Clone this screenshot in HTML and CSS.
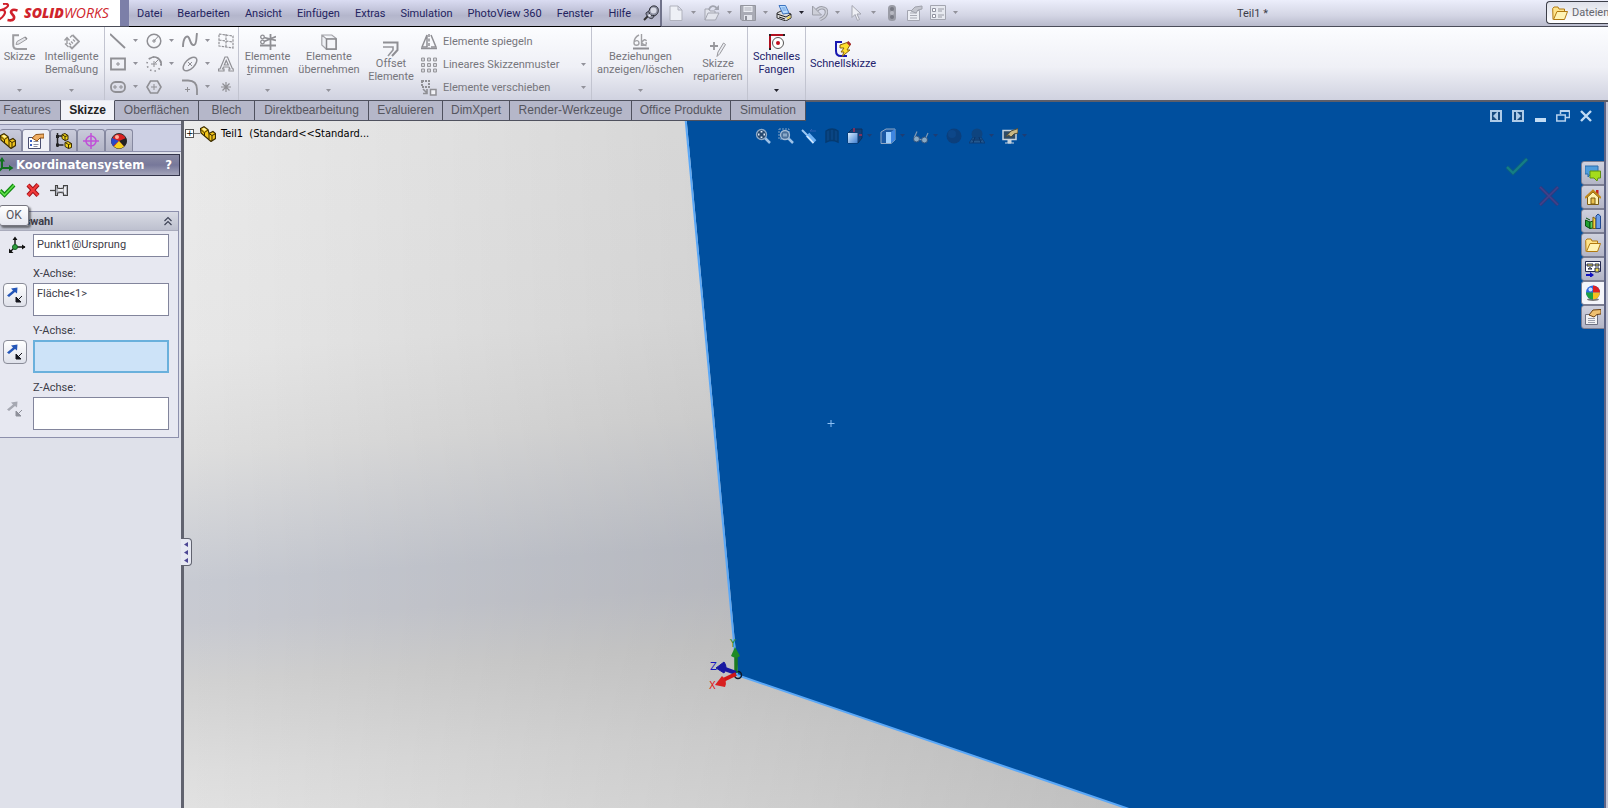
FILE: index.html
```html
<!DOCTYPE html>
<html lang="de">
<head>
<meta charset="utf-8">
<title>SolidWorks – Teil1</title>
<link rel="stylesheet" href="styles.css">
</head>
<body>
<svg class="sprite" aria-hidden="true">
  <defs>
    <linearGradient id="gold" x1="0" y1="0" x2="1" y2="1"><stop offset="0" stop-color="#fff6a8"/><stop offset="1" stop-color="#e0a020"/></linearGradient>
    <linearGradient id="lens" x1="0" y1="0" x2="1" y2="1"><stop offset="0" stop-color="#d8ecff"/><stop offset="1" stop-color="#3f7fd0"/></linearGradient>
  </defs>
  <symbol id="i-arrow" viewBox="0 0 6 4"><path d="M0 0h5L2.500 3z" fill="currentColor"/></symbol>
  <symbol id="i-pin" viewBox="0 0 16 16"><path d="M1 15 5 11" stroke="#333" stroke-width="2"/><path d="M3 8.500C3 7 5 7 6 6l1-3c2-3 6-2.500 7.500-.5s1 6-1.500 7.500l-2 1c-1 3-3 3-4.500 2S3 10 3 8.500z" fill="#8c8fa0" stroke="#2c2e38"/><path d="M6 7c0 3 3 4 5 3.500" stroke="#2c2e38" fill="none"/><circle cx="10.500" cy="5.500" r="3" fill="#d8dae6"/><circle cx="6.500" cy="10.500" r="1.300" fill="#eef0f8"/></symbol>
  <symbol id="i-new" viewBox="0 0 16 16"><path d="M2 1h8l4 4v10.500H2zM10 1v4h4" fill="#eef0f6" stroke="#b0b2bd"/></symbol>
  <symbol id="i-open" viewBox="0 0 16 16"><path d="M1 15V4h4l1 2h5v2M1 15l3-7h11l-3.500 7z" fill="#e2e4ec" stroke="#a3a5b0"/><path d="M5 5c1-5 6-5 8-1" fill="none" stroke="#a3a5b0" stroke-width="1.600"/><path d="M10 5h5V0z" fill="#a3a5b0"/></symbol>
  <symbol id="i-save" viewBox="0 0 16 16"><path d="M.5.500h15v15H2L.5 14z" fill="#a9abb5" stroke="#94969f"/><path d="M3.500 1h9v6h-9z" fill="#eceef4"/><path d="M4.500 3h7M4.500 5h7" stroke="#a9abb5"/><path d="M4 10h8v5H4z" fill="#e3e5ec"/><path d="M5 11h2v4H5z" fill="#8d8f99"/></symbol>
  <symbol id="i-print" viewBox="0 0 16 16"><path d="M1 8l4-2 10 3v4l-5 3-9-3z" fill="#d9d9d9" stroke="#333"/><path d="M3 .5h6.500L13 8l-6 1z" fill="#b7dcff" stroke="#3d74c0"/><path d="M5.500 3h4m-3 2h4" stroke="#6a9cdc"/><path d="M1 9l9 3 5-3M3 12l6 2" stroke="#222" fill="none"/><path d="M11 13.500l3.500-2" stroke="#ecd34c" stroke-width="1.500"/></symbol>
  <symbol id="i-undo" viewBox="0 0 16 16"><path d="M4 7c3-6 10.500-5 10.500 0 0 4-3 6-6.500 7.500" fill="none" stroke="#9c9ea8" stroke-width="3.500"/><path d="M4 7c3-6 10.500-5 10.500 0 0 4-3 6-6.500 7.500" fill="none" stroke="#cdcfd8" stroke-width="1.500"/><path d="M.5 1v9h9z" fill="#cdcfd8" stroke="#9c9ea8"/></symbol>
  <symbol id="i-select" viewBox="0 0 16 16"><path d="M4 .5v12l3-3 2.500 6 2-1-2.500-5.500h4z" fill="#eff0f5" stroke="#a3a5b0"/></symbol>
  <symbol id="i-light" viewBox="0 0 16 16"><rect x="4" y="0" width="8" height="16" rx="3.500" fill="#9a9ca6"/><circle cx="8" cy="4" r="2" fill="#777984"/><circle cx="8" cy="8" r="2" fill="#b7b9c2"/><circle cx="8" cy="12" r="2" fill="#777984"/></symbol>
  <symbol id="i-filegray" viewBox="0 0 16 16"><path d="M.5 5.500h12v10H.5z" fill="#eceef4" stroke="#a3a5b0"/><path d="M3 8h7m-7 2.500h7M3 13h7" stroke="#a9abb5"/><path d="M4 6l4-4 7-1v3l-4 1-2 3z" fill="#c3c5ce" stroke="#a0a2ac"/></symbol>
  <symbol id="i-options" viewBox="0 0 16 16"><path d="M.5.500h15v14H.5z" fill="#e7e9f0" stroke="#a3a5b0"/><path d="M2.500 3.500h3v3h-3zM2.500 9.500h3v3h-3z" fill="#fff" stroke="#9092a0"/><path d="M8 4h6M8 6h4m-4 4h6m-6 2h4" stroke="#9a9ca6"/></symbol>
  <symbol id="i-folder" viewBox="0 0 16 16"><path d="M1 14.500 .7 3.500 2 2h4l1 2h5.500v2.500" fill="#ffe48a" stroke="#b07810"/><path d="M1.500 14.500 5 6.500h10.500l-3 8z" fill="#fff3b4" stroke="#b07810"/></symbol>

  <symbol id="i-sketch" viewBox="0 0 16 16"><path d="M7 1.200H1.200V11q0 4 4 4H15" fill="none" stroke="#9c9ca0" stroke-width="2"/><path d="M4 10.500l1-3 8-4.500 2 2-8 5z" fill="#e4e5ea" stroke="#9c9ca0"/><path d="M13 3l2 2" stroke="#88888c" stroke-width="1.500"/></symbol>
  <symbol id="i-dim" viewBox="0 0 16 16"><path d="M8.500 1 15 7.500 8 14.500 5.500 12" fill="none" stroke="#9c9ca0" stroke-width="1.800"/><path d="M8.500 1 6 3.500M9 5.500l2 2M7 7.500l2 2M5 9l2 2" fill="none" stroke="#9c9ca0" stroke-width="1.400"/><path d="M3 10V4M.5 6.500 3 3.500l2.500 3M1 9.500 4.500 13" stroke="#9c9ca0" stroke-width="1.400" fill="none"/></symbol>
  <symbol id="i-line" viewBox="0 0 16 16"><path d="M0 1l15 14" stroke="#8f8f94" stroke-width="1.800"/></symbol>
  <symbol id="i-circle" viewBox="0 0 16 16"><circle cx="8" cy="8" r="6.800" fill="none" stroke="#8f8f94" stroke-width="1.500"/><path d="M8 8l4.500-5M8 6v4M6 8h4" stroke="#8f8f94"/></symbol>
  <symbol id="i-spline" viewBox="0 0 16 16"><path d="M1 14C1 5 5 1 7 5s2 8 5 7 2-6 3-12" fill="none" stroke="#8f8f94" stroke-width="1.900"/></symbol>
  <symbol id="i-plane" viewBox="0 0 16 16"><path d="M1 1l14 2v12L1 13zM1 7l14 2M8 1v14" fill="none" stroke="#8f8f94" stroke-width="1.200" stroke-dasharray="2.500 1"/></symbol>
  <symbol id="i-rect" viewBox="0 0 16 16"><path d="M1 2.500h14v11H1z" fill="none" stroke="#8f8f94" stroke-width="1.800"/><path d="M7 7h2v2H7z" fill="none" stroke="#8f8f94"/></symbol>
  <symbol id="i-arc" viewBox="0 0 16 16"><path d="M4 2.500a7 7 0 0 1 11 7" fill="none" stroke="#8f8f94" stroke-width="1.600"/><circle cx="8" cy="8" r="7" fill="none" stroke="#8f8f94" stroke-width="1.600" stroke-dasharray="1.500 3"/><path d="M8 5v6M5 8h6m-2-1 3-3" stroke="#8f8f94"/></symbol>
  <symbol id="i-ellipse" viewBox="0 0 16 16"><ellipse cx="8" cy="8" rx="8.500" ry="4.500" transform="rotate(-45 8 8)" fill="none" stroke="#8f8f94" stroke-width="1.500"/><path d="M6 6l4 4m0-4-4 4" stroke="#8f8f94"/></symbol>
  <symbol id="i-text" viewBox="0 0 16 16"><path d="M7 1h2.500l5 12H16v2h-5v-2h1l-1-2H5.500l-1 2H6v2H.5v-2H2zM8.200 4.500 6.300 9h4z" fill="none" stroke="#8f8f94" stroke-width="1.200"/></symbol>
  <symbol id="i-slot" viewBox="0 0 16 16"><rect x="1" y="3" width="14" height="10" rx="4.500" fill="none" stroke="#8f8f94" stroke-width="1.800"/><path d="M4 7h2v2H4zm6 0h2v2h-2z" fill="none" stroke="#8f8f94"/></symbol>
  <symbol id="i-hex" viewBox="0 0 16 16"><path d="M4.500 2h7L15 8l-3.500 6h-7L1 8z" fill="none" stroke="#8f8f94" stroke-width="1.600"/><path d="M8 5v6M5 8h6" stroke="#8f8f94"/></symbol>
  <symbol id="i-fillet" viewBox="0 0 16 16"><path d="M0 1.500h6q9 0 9 9V16" fill="none" stroke="#8f8f94" stroke-width="1.800"/><path d="M5.500 8v5M3 10.500h5" stroke="#8f8f94"/></symbol>
  <symbol id="i-point" viewBox="0 0 16 16"><path d="M8 3v10M3 8h10M4.500 4.500l7 7m0-7-7 7" stroke="#8f8f94" stroke-width="1.200"/></symbol>
  <symbol id="i-trim" viewBox="0 0 16 16"><path d="M0 11.500h16M10.500 0v16M4 3.500l12 3M4 7.500l12-5" stroke="#8f8f94" stroke-width="1.800"/><circle cx="2.500" cy="3" r="1.800" fill="none" stroke="#8f8f94" stroke-width="1.300"/><circle cx="2.500" cy="8" r="1.800" fill="none" stroke="#8f8f94" stroke-width="1.300"/></symbol>
  <symbol id="i-convert" viewBox="0 0 16 16"><path d="M.8 1h10l4.500 3.500v10.800H5.500L.8 11zM.8 1 5.500 5h9.800" fill="#eef0f5" stroke="#a4a4a9" stroke-width="1.200"/><path d="M5.500 5h9.500v10H5.500z" fill="#f4f5f9" stroke="#88888c" stroke-width="1.500"/></symbol>
  <symbol id="i-offset" viewBox="0 0 16 16"><path d="M0 1.500h14.500V9L9 15" fill="none" stroke="#8f8f94" stroke-width="2"/><path d="M0 6h10v3l-5 6" fill="none" stroke="#97979c" stroke-width="1.600"/></symbol>
  <symbol id="i-mirror" viewBox="0 0 16 16"><path d="M6 1 1 13h5zm4 0 5 12h-5" fill="none" stroke="#8f8f94" stroke-width="1.500"/><path d="M8 0v15" stroke="#8f8f94" stroke-width="1.500" stroke-dasharray="3 1.500"/><path d="M0 14.500h16" stroke="#8f8f94" stroke-width="1.500"/></symbol>
  <symbol id="i-pattern" viewBox="0 0 16 16"><path d="M.5 1h3v3h-3zm6 0h3v3h-3zm6 0h3v3h-3zM.5 6.500h3v3h-3zm6 0h3v3h-3zm6 0h3v3h-3zM.5 12h3v3h-3zm6 0h3v3h-3zm6 0h3v3h-3z" fill="#d4d5da" stroke="#98989d"/></symbol>
  <symbol id="i-move" viewBox="0 0 16 16"><path d="M1 1h7v6H1z" fill="none" stroke="#8f8f94" stroke-width="2" stroke-dasharray="2 1"/><path d="M9.500 9.500h5.500v5.500H9.500z" fill="#f2f3f7" stroke="#8f8f94" stroke-width="1.500"/><path d="M2 9l4 4m0-4v4.500H2" fill="none" stroke="#8f8f94" stroke-width="1.600"/></symbol>
  <symbol id="i-relations" viewBox="0 0 16 16"><path d="M6 1C2 3 1 6 1 9c0 3 5 3 5 0S3 6 1 8M8.500 0v12M8.500 9c2-4 4-4 5-2m-5 2 5 3M9 11c4 1 5-1 4-3" fill="none" stroke="#a0a0a4" stroke-width="1.400"/><path d="M0 14.500h16" stroke="#8f8f94" stroke-width="2"/></symbol>
  <symbol id="i-repair" viewBox="0 0 16 16"><path d="M0 5h8M4 1v8" stroke="#97979c" stroke-width="1.800"/><path d="M7 15.500 8 11l5.500-9 2 1.500-5.500 9z" fill="#eceef3" stroke="#97979c"/></symbol>
  <symbol id="i-snap" viewBox="0 0 16 16"><path d="M1 16V1h15" fill="none" stroke="#b01020" stroke-width="2"/><path d="M0 0h2v2H0zM0 14h2v2H0zM14 0h2v2h-2z" fill="#222"/><circle cx="9" cy="9" r="5.500" fill="#fff" stroke="#555"/><circle cx="9" cy="9" r="2" fill="#c01020"/></symbol>
  <symbol id="i-rapid" viewBox="0 0 16 16"><path d="M7 1H1v9q0 5 5 5h6" fill="none" stroke="#1818b0" stroke-width="2"/><path d="M13.500 1 5 4v3h4l-3 4h3l-2 4.500L15 9h-3l3-5z" fill="#ffdf30" stroke="#8a6410"/><path d="M12.500 1l3 3" stroke="#a83030" stroke-width="2.500"/></symbol>

  <symbol id="i-part" viewBox="0 0 16 16"><path d="M.5 2.500 4 .8 8 3.500l1 4 4-2 2.500 2v5L11 15.500 1 7z" fill="#f2c51c" stroke="#3b2c00" stroke-width="1.200"/><path d="M1 3.500 4.500 7v3M4.500 6.500 8 4M9 8v5m0-5.500 3 2 3-1.500M12 9.500V15" fill="none" stroke="#3b2c00"/><path d="M2 3l2-1.300L6.500 3.500 4.800 5z" fill="#fff3a0"/></symbol>
  <symbol id="i-props" viewBox="0 0 16 16"><path d="M.5 4.500h12v11H.5z" fill="#fff" stroke="#4a4f70"/><path d="M2 7h2v2H2zm0 4h2v2H2z" fill="#3c60c0"/><path d="M5.500 8.500h5m-5 3h5m-5 2h4" stroke="#8a8ea4"/><path d="M4 5l4-3.500 8-.5v4h-4L9 8z" fill="#f0ae62" stroke="#8c5218"/></symbol>
  <symbol id="i-custom" viewBox="0 0 16 16"><path d="M.5 5.500h12v10H.5z" fill="#f2f2f4" stroke="#6c7080"/><path d="M3 9.500h7m-7 2h7m-7 2h7" stroke="#9a9eac"/><path d="M4 6l4-5 8-.5V5l-4 .5L9 8z" fill="#efc070" stroke="#6c4010"/></symbol>
  <symbol id="i-config" viewBox="0 0 16 16"><path d="M1.500 0v14M1.500 3h5M1.500 12h6" fill="none" stroke="#222" stroke-width="1.500"/><path d="M0 2h3v3H0zM0 10.500h3v3H0z" fill="#222"/><path d="M6 1.500l3-1 3 2v4L9 7.500 6 5.500zM9 9.500l3-1 3.500 2v4l-3 1L9 13.500z" fill="#f2d51c" stroke="#3b2c00"/><path d="M6 1.500l3 2v4M9 3.500l3-1M9 9.500l3.500 2v4m0-4 3-1" fill="none" stroke="#3b2c00"/></symbol>
  <symbol id="i-target" viewBox="0 0 16 16"><circle cx="8" cy="8" r="5" fill="none" stroke="#c050d8" stroke-width="1.600"/><path d="M8 0v16M0 8h16" stroke="#c050d8" stroke-width="1.500"/></symbol>
  <symbol id="i-ball" viewBox="0 0 16 16"><ellipse cx="8" cy="14.500" rx="6" ry="1.500" fill="#777"/><circle cx="8" cy="7.500" r="7" fill="#2f6ae0"/><path d="M8 7.500V.5a7 7 0 0 1 7 7z" fill="#e02020"/><path d="M8 7.500h7a7 7 0 0 1-7 7z" fill="#f5c020"/><path d="M8 7.500v7a7 7 0 0 1-7-7z" fill="#20a040"/><circle cx="5.500" cy="4.500" r="2" fill="#c8dcff"/></symbol>
  <symbol id="i-ballsw" viewBox="0 0 16 16"><circle cx="8" cy="8" r="7.500" fill="#d82020" stroke="#333"/><path d="M8 8 1 5a7.500 7.500 0 0 0 1 8z" fill="#2848c8"/><path d="M8 8 15 5a7.500 7.500 0 0 1-2 8.500z" fill="#222"/><path d="M8 8l5 5.500a7.500 7.500 0 0 1-10 0z" fill="#f4d020"/><circle cx="6" cy="4" r="2" fill="#ffb0a0"/></symbol>
  <symbol id="i-csys" viewBox="0 0 16 16"><path d="M2 11V2M2 11h10M2 11l-4 4" stroke="#107020" stroke-width="2"/><path d="M-1 4.500 2 0l3 4.500zM9 8l4.500 3L9 14z" fill="#107020"/></symbol>
  <symbol id="i-origin" viewBox="0 0 18 18"><path d="M7 11V2M7 11h10M7 11l-5 5" stroke="#111" stroke-width="1.400" fill="none"/><path d="M4.500 4 7 .5 9.500 4zM14 8.500l3.500 2.500-3.500 2.500zM1 12.500V17h4.500z" fill="#111"/><circle cx="7" cy="11" r="2.500" fill="#30a040" stroke="#106020"/></symbol>
  <symbol id="i-ok" viewBox="0 0 16 16"><path d="M0 8.500 4.500 13 14 3" fill="none" stroke="#128a12" stroke-width="4"/><path d="M0 8.500 4.500 13 14 3" fill="none" stroke="#5fe04a" stroke-width="1.600"/></symbol>
  <symbol id="i-cancel" viewBox="0 0 16 16"><path d="M3 3l10 10.500M13 2.500 3 13.500" stroke="#a01018" stroke-width="4.200"/><path d="M3 3l10 10.500M13 2.500 3 13.500" stroke="#f03a3a" stroke-width="2.400"/></symbol>
  <symbol id="i-keep" viewBox="0 0 18 16"><path d="M0 8.500h6" stroke="#444" stroke-width="1.300"/><path d="M5.500 3.500h2V6q3 1 6 0V3.500h4v10h-4V11q-3-1-6 0v2.500h-2z" fill="#b4b6c0" stroke="#444" stroke-width="1.100"/><path d="M8 8h5m2-3v7" stroke="#fff" stroke-width="1.500"/></symbol>
  <symbol id="i-flip" viewBox="0 0 16 16"><path d="M0 8.500 6 3.500 4 1.500 10.500.5 10 6.500 8 5l-6 5z" fill="var(--flip-a)"/><path d="M15 9l-3.500 3.500M9 10v5h5z" fill="var(--flip-b)" stroke="var(--flip-b)"/></symbol>
  <symbol id="i-chevrons" viewBox="0 0 10 10"><path d="M1.500 5 5 1.500 8.500 5M1.500 9 5 5.500 8.500 9" fill="none" stroke="#3e4356" stroke-width="1.200"/></symbol>

  <symbol id="i-zoomfit" viewBox="0 0 16 16"><path d="M10 10l5 5" stroke="#9cc2e8" stroke-width="2.500"/><circle cx="6.500" cy="6.500" r="5" fill="#27496f" stroke="#8ea9c6" stroke-width="1.300"/><path d="M6.500 3v1.500m0 4V10M3 6.500h1.500m4 0H10" stroke="#e4eefa" stroke-width="1.800"/></symbol>
  <symbol id="i-zoomarea" viewBox="0 0 16 16"><path d="M10 10l5 5" stroke="#9cc2e8" stroke-width="2.500"/><path d="M1 1h10v10H1z" fill="none" stroke="#7fa0c4" stroke-dasharray="2 1"/><circle cx="7" cy="7" r="4.500" fill="#4a709b" stroke="#a4bcd6" stroke-width="1.300"/><path d="M5 5.500h4v3H5z" fill="#88a8c8"/></symbol>
  <symbol id="i-prev" viewBox="0 0 16 16"><path d="M1 2l6 6" stroke="#9cc8f4" stroke-width="2"/><path d="M6.500 6.500l7 7.500" stroke="#6eb1f4" stroke-width="5"/><path d="M6 8l6.500 7" stroke="#d9ecff" stroke-width="1.500"/><path d="M9 3h6m-6 0 2-2" stroke="#2f62b4"/></symbol>
  <symbol id="i-section" viewBox="0 0 16 16"><path d="M2 3q6-4 12 0v11q-6-3-12 0zM6 2v11m4-11v11" fill="#0a4583" stroke="#053a70" stroke-width="1.400"/></symbol>
  <symbol id="i-orient" viewBox="0 0 16 16"><path d="M1 5 5 1h10v9l-4 5H1z" fill="#123f76" stroke="#0b3160"/><path d="M1 5h9.500v10H1z" fill="url(#lens)"/><path d="M7 0v4m5 3h3" stroke="#a3305a" stroke-width="1.500"/></symbol>
  <symbol id="i-style" viewBox="0 0 16 16"><path d="M1 4 6 1h9v11l-4 3.500H1z" fill="#1a59a4" stroke="#8fa8c4"/><path d="M6 4h5v11H6z" fill="#9ed0ff"/><path d="M11 4l4-3v11l-4 3z" fill="#3e86e0"/></symbol>
  <symbol id="i-glasses" viewBox="0 0 16 16"><circle cx="3.500" cy="11" r="3" fill="#88a9c4" stroke="#31527c"/><circle cx="11.500" cy="12" r="3" fill="#88a9c4" stroke="#31527c"/><path d="M6.500 11l2 1M1.500 9 4 3.500M13 9.500 15 5" fill="none" stroke="#7e98b2" stroke-width="1.200"/></symbol>
  <symbol id="i-sphere" viewBox="0 0 16 16"><circle cx="8" cy="8" r="7.500" fill="#0b3f7c"/><circle cx="6" cy="6" r="4" fill="#0d4789"/></symbol>
  <symbol id="i-scene" viewBox="0 0 16 16"><path d="M0 15 4 9h8l4 6z" fill="#23588f" stroke="#0a3d78"/><circle cx="8" cy="6" r="5.500" fill="#0e447f"/><path d="M3 12h10M6 9l-2 6m6-6 2 6" stroke="#0a3468"/></symbol>
  <symbol id="i-monitor" viewBox="0 0 16 16"><path d="M1 2.500h13v9H1z" fill="#2e4c68" stroke="#c8d4de" stroke-width="1.500"/><path d="M3 15h9m-6-3h3v3H6z" stroke="#c8d4de" fill="#c8d4de"/><path d="M4 8.500 9 3l7-2.500V5l-4 1-3 3-2-1.500z" fill="#c9b884" stroke="#4c4a3c"/></symbol>

  <symbol id="i-winleft" viewBox="0 0 12 12"><path d="M0 0h12v12H0z" fill="#aecbe8"/><path d="M2 2h5v8H2z" fill="#164a80"/><path d="M7 2v8L3 6z" fill="#aecbe8"/><path d="M8 2h2v8H8z" fill="#164a80"/></symbol>
  <symbol id="i-winright" viewBox="0 0 12 12"><path d="M0 0h12v12H0z" fill="#aecbe8"/><path d="M5 2h5v8H5z" fill="#164a80"/><path d="M5 2v8l4-4z" fill="#aecbe8"/><path d="M2 2h2v8H2z" fill="#164a80"/></symbol>
  <symbol id="i-winmin" viewBox="0 0 12 12"><path d="M1 8h11v4H1z" fill="#c2dcf4"/></symbol>
  <symbol id="i-winmax" viewBox="0 0 14 12"><path d="M4.500 4V1h9v6.500H10" fill="none" stroke="#b7d2ee" stroke-width="1.500"/><path d="M.8 5h8.500v6H.8z" fill="none" stroke="#b7d2ee" stroke-width="1.500"/><path d="M4 1h9.500" stroke="#b7d2ee" stroke-width="2"/></symbol>
  <symbol id="i-winclose" viewBox="0 0 12 12"><path d="M1 1l10 10M11 1 1 11" stroke="#c2dcf4" stroke-width="2.400"/></symbol>

  <symbol id="i-chat" viewBox="0 0 16 16"><path d="M0 1h13v8H6l-3 3V9H0z" fill="#4f9ddc" stroke="#2a6cab"/><path d="M5 6h10.500v7H13l-1 3-3-3H5z" fill="#a5dc1c" stroke="#5e9210"/></symbol>
  <symbol id="i-home" viewBox="0 0 16 16"><path d="M11 1h2.500v5H11z" fill="#c82020"/><path d="M2.500 8v7.500h11V8L8 3z" fill="#fff2b0" stroke="#7a5a10"/><path d="M0 9 8 1.500 16 9" fill="none" stroke="#c08818" stroke-width="2"/><path d="M6 9h4v6H6z" fill="#e8c050" stroke="#7a5a10"/></symbol>
  <symbol id="i-library" viewBox="0 0 16 16"><path d="M.5 7 5 9v6.500L.5 13z" fill="#20a030" stroke="#0a5010"/><path d="M5 9l3-1v7l-3 .5zM1 5l4 2" fill="#60d060" stroke="#0a5010"/><path d="M8 4l3 2v9.500H8z" fill="#f4d040" stroke="#806010"/><path d="M11 3l2-2 2.500 2v12.500H11z" fill="#6a9ce8" stroke="#204890"/></symbol>
  <symbol id="i-palette" viewBox="0 0 16 16"><path d="M.5.500h15v10H.5z" fill="#fff" stroke="#222850"/><path d="M2 3h6v2H2zm8 0h4v2h-4zM3 8q2-3 4 0zM10 7h4v4h-4z" fill="#f2de50" stroke="#222850"/><path d="M1 14h5" stroke="#1010c0" stroke-width="2"/><path d="M5 11l4 3-4 3z" fill="#1010c0"/></symbol>
</svg>

<div class="app">
  <header class="titlebar">
    <div class="brand">
      <svg class="brand-mark" viewBox="0 0 20 20"><path d="M3 1c6-1 7 2 1 5L0 7.500M0 7c5-1 6 2 4 5s-3 4-6 5" fill="none" stroke="#d0202a" stroke-width="2.200"/><path d="M17.500 7.500c-6-2-8 1-5 4s2 7-5 5.500" fill="none" stroke="#d0202a" stroke-width="2.600"/></svg>
      <span class="brand-name"><b>SOLID</b>WORKS</span>
    </div>
    <nav class="menu">
      <button>Datei</button><button>Bearbeiten</button><button>Ansicht</button><button>Einfügen</button><button>Extras</button><button>Simulation</button><button>PhotoView 360</button><button>Fenster</button><button>Hilfe</button>
      <button class="menu-pin" aria-label="Menü anheften"><svg class="ic"><use href="#i-pin"/></svg></button>
    </nav>
    <div class="quick">
      <button class="split" aria-label="Neu"><svg class="ic"><use href="#i-new"/></svg><svg class="dd"><use href="#i-arrow"/></svg></button>
      <button class="split" aria-label="Öffnen"><svg class="ic"><use href="#i-open"/></svg><svg class="dd"><use href="#i-arrow"/></svg></button>
      <button class="split" aria-label="Speichern"><svg class="ic"><use href="#i-save"/></svg><svg class="dd"><use href="#i-arrow"/></svg></button>
      <button class="split on" aria-label="Drucken"><svg class="ic"><use href="#i-print"/></svg><svg class="dd"><use href="#i-arrow"/></svg></button>
      <button class="split" aria-label="Rückgängig"><svg class="ic"><use href="#i-undo"/></svg><svg class="dd"><use href="#i-arrow"/></svg></button>
      <button class="split" aria-label="Auswählen"><svg class="ic"><use href="#i-select"/></svg><svg class="dd"><use href="#i-arrow"/></svg></button>
      <button class="single" aria-label="Modellneuaufbau"><svg class="ic"><use href="#i-light"/></svg></button>
      <button class="single" aria-label="Dateieigenschaften"><svg class="ic"><use href="#i-filegray"/></svg></button>
      <button class="split" aria-label="Optionen"><svg class="ic"><use href="#i-options"/></svg><svg class="dd"><use href="#i-arrow"/></svg></button>
    </div>
    <h1 class="doc-title">Teil1 *</h1>
    <label class="search"><svg class="ic"><use href="#i-folder"/></svg><input type="text" value="Dateien" aria-label="Suche"></label>
  </header>

  <div class="ribbon">
    <button class="tool"><svg class="ic"><use href="#i-sketch"/></svg><span>Skizze</span><svg class="dd"><use href="#i-arrow"/></svg></button>
    <button class="tool sep"><svg class="ic"><use href="#i-dim"/></svg><span>Intelligente<br>Bemaßung</span><svg class="dd"><use href="#i-arrow"/></svg></button>
    <div class="entities sep">
      <button class="split" aria-label="Linie"><svg class="ic"><use href="#i-line"/></svg><svg class="dd"><use href="#i-arrow"/></svg></button>
      <button class="split" aria-label="Kreis"><svg class="ic"><use href="#i-circle"/></svg><svg class="dd"><use href="#i-arrow"/></svg></button>
      <button class="split" aria-label="Spline"><svg class="ic"><use href="#i-spline"/></svg><svg class="dd"><use href="#i-arrow"/></svg></button>
      <button aria-label="Ebene"><svg class="ic"><use href="#i-plane"/></svg></button>
      <button class="split" aria-label="Rechteck"><svg class="ic"><use href="#i-rect"/></svg><svg class="dd"><use href="#i-arrow"/></svg></button>
      <button class="split" aria-label="Bogen"><svg class="ic"><use href="#i-arc"/></svg><svg class="dd"><use href="#i-arrow"/></svg></button>
      <button class="split" aria-label="Ellipse"><svg class="ic"><use href="#i-ellipse"/></svg><svg class="dd"><use href="#i-arrow"/></svg></button>
      <button aria-label="Text"><svg class="ic"><use href="#i-text"/></svg></button>
      <button class="split" aria-label="Langloch"><svg class="ic"><use href="#i-slot"/></svg><svg class="dd"><use href="#i-arrow"/></svg></button>
      <button aria-label="Polygon"><svg class="ic"><use href="#i-hex"/></svg></button>
      <button class="split" aria-label="Verrundung"><svg class="ic"><use href="#i-fillet"/></svg><svg class="dd"><use href="#i-arrow"/></svg></button>
      <button aria-label="Punkt"><svg class="ic"><use href="#i-point"/></svg></button>
    </div>
    <button class="tool"><svg class="ic"><use href="#i-trim"/></svg><span>Elemente<br><u>t</u>rimmen</span><svg class="dd"><use href="#i-arrow"/></svg></button>
    <button class="tool"><svg class="ic"><use href="#i-convert"/></svg><span>Elemente<br>übernehmen</span><svg class="dd"><use href="#i-arrow"/></svg></button>
    <button class="tool low"><svg class="ic"><use href="#i-offset"/></svg><span>Offset<br>Elemente</span></button>
    <div class="list sep">
      <button><svg class="ic"><use href="#i-mirror"/></svg><span>Elemente spiegeln</span></button>
      <button><svg class="ic"><use href="#i-pattern"/></svg><span>Lineares Skizzenmuster</span><svg class="dd"><use href="#i-arrow"/></svg></button>
      <button><svg class="ic"><use href="#i-move"/></svg><span>Elemente verschieben</span><svg class="dd"><use href="#i-arrow"/></svg></button>
    </div>
    <button class="tool"><svg class="ic"><use href="#i-relations"/></svg><span>Beziehungen<br>anzeigen/löschen</span><svg class="dd"><use href="#i-arrow"/></svg></button>
    <button class="tool low sep"><svg class="ic"><use href="#i-repair"/></svg><span>Skizze<br>reparieren</span></button>
    <button class="tool on sep"><svg class="ic"><use href="#i-snap"/></svg><span>Schnelles<br>Fangen</span><svg class="dd"><use href="#i-arrow"/></svg></button>
    <button class="tool low on"><svg class="ic"><use href="#i-rapid"/></svg><span>Schnellskizze</span></button>
  </div>

  <main class="workspace">
    <nav class="tabs">
      <button class="first">Features</button><button class="active">Skizze</button><button>Oberflächen</button><button>Blech</button><button>Direktbearbeitung</button><button>Evaluieren</button><button>DimXpert</button><button>Render-Werkzeuge</button><button>Office Produkte</button><button>Simulation</button>
    </nav>

    <aside class="panel">
      <div class="panel-tabs">
        <button aria-label="FeatureManager"><svg class="ic"><use href="#i-part"/></svg></button>
        <button class="active" aria-label="PropertyManager"><svg class="ic"><use href="#i-props"/></svg></button>
        <button aria-label="ConfigurationManager"><svg class="ic"><use href="#i-config"/></svg></button>
        <button aria-label="DimXpertManager"><svg class="ic"><use href="#i-target"/></svg></button>
        <button aria-label="DisplayManager"><svg class="ic"><use href="#i-ballsw"/></svg></button>
      </div>
      <h2 class="panel-title"><svg class="ic"><use href="#i-csys"/></svg><span>Koordinatensystem</span><button>?</button></h2>
      <div class="confirm">
        <button aria-label="Bestätigen"><svg class="ic"><use href="#i-ok"/></svg></button>
        <button aria-label="Abbrechen"><svg class="ic"><use href="#i-cancel"/></svg></button>
        <button aria-label="Sichtbar halten"><svg class="ic wide"><use href="#i-keep"/></svg></button>
        <span class="tooltip">OK</span>
      </div>
      <section class="group">
        <h3 class="group-head"><span>Auswahl</span><svg class="chev"><use href="#i-chevrons"/></svg></h3>
        <div class="group-body">
          <svg class="origin"><use href="#i-origin"/></svg>
          <input class="field short" type="text" value="Punkt1@Ursprung" aria-label="Ursprung">
          <label for="ax">X-Achse:</label>
          <button class="flip" aria-label="X-Achse umkehren"><svg class="ic"><use href="#i-flip"/></svg></button>
          <textarea class="field" id="ax">Fläche&lt;1&gt;</textarea>
          <label for="ay">Y-Achse:</label>
          <button class="flip" aria-label="Y-Achse umkehren"><svg class="ic"><use href="#i-flip"/></svg></button>
          <textarea class="field current" id="ay"></textarea>
          <label for="az">Z-Achse:</label>
          <button class="flip off" disabled aria-label="Z-Achse umkehren"><svg class="ic"><use href="#i-flip"/></svg></button>
          <textarea class="field" id="az"></textarea>
        </div>
      </section>
      <button class="splitter" aria-label="Bereich ausblenden"><svg viewBox="0 0 10 28"><path d="M7 3v5L3 5.500zM7 11v5l-4-2.500zM7 19v5l-4-2.500z" fill="#4c4694"/></svg></button>
    </aside>

    <section class="viewport">
      <svg class="scene" viewBox="0 0 1420 706" preserveAspectRatio="xMinYMin slice">
        <path d="M501 0 554 573 942 706H4000V0z" fill="#004f9e"/>
        <path d="M500 0 553 573 942 706l300 103" fill="none" stroke="#5aa8f8" stroke-width="2"/>
        <path d="M647 318v7M643.500 321.500h7" stroke="#8cc0f4"/>
        <circle cx="554" cy="573" r="3.500" fill="none" stroke="#101828" stroke-width="1.500"/>
        <path d="M552 571V552" stroke="#1c7a20" stroke-width="3.500"/><path d="M547 554 551 545l5 9q-4 3-9 0z" fill="#1f8a24"/>
        <path d="M552 571l-14-5" stroke="#1818a0" stroke-width="4"/><path d="M540 571l-8-5 8-6q4 5 0 11z" fill="#1818a0" stroke="#1818a0"/>
        <path d="M552 572l-15 7" stroke="#d01818" stroke-width="4"/><path d="M541 585l-10-2 7-9q6 5 3 11z" fill="#d82020"/>
        <text class="axis-y" x="546" y="545">Y</text><text class="axis-z" x="526" y="568">Z</text><text class="axis-x" x="525" y="587">X</text>
      </svg>

      <div class="tree"><button class="expand" aria-label="Aufklappen">+</button><i></i><svg class="ic"><use href="#i-part"/></svg><span>Teil1&nbsp; (Standard&lt;&lt;Standard...</span></div>

      <div class="view-tools">
        <button aria-label="Zoomfenster anpassen"><svg class="ic"><use href="#i-zoomfit"/></svg></button>
        <button aria-label="Bereich vergrößern"><svg class="ic"><use href="#i-zoomarea"/></svg></button>
        <button aria-label="Vorherige Ansicht"><svg class="ic"><use href="#i-prev"/></svg></button>
        <button aria-label="Schnittansicht"><svg class="ic"><use href="#i-section"/></svg></button>
        <button class="more" aria-label="Ansichtsausrichtung"><svg class="ic"><use href="#i-orient"/></svg><svg class="dd"><use href="#i-arrow"/></svg></button>
        <button class="more" aria-label="Anzeigeart"><svg class="ic"><use href="#i-style"/></svg><svg class="dd"><use href="#i-arrow"/></svg></button>
        <button class="more" aria-label="Einblenden"><svg class="ic"><use href="#i-glasses"/></svg><svg class="dd"><use href="#i-arrow"/></svg></button>
        <button aria-label="Erscheinungsbild"><svg class="ic"><use href="#i-sphere"/></svg></button>
        <button class="more" aria-label="Bühne"><svg class="ic"><use href="#i-scene"/></svg><svg class="dd"><use href="#i-arrow"/></svg></button>
        <button class="more" aria-label="Ansichtseinstellungen"><svg class="ic"><use href="#i-monitor"/></svg><svg class="dd"><use href="#i-arrow"/></svg></button>
      </div>

      <div class="win-tools">
        <button aria-label="Links"><svg><use href="#i-winleft"/></svg></button>
        <button aria-label="Rechts"><svg><use href="#i-winright"/></svg></button>
        <button aria-label="Minimieren"><svg><use href="#i-winmin"/></svg></button>
        <button aria-label="Wiederherstellen"><svg class="w14"><use href="#i-winmax"/></svg></button>
        <button aria-label="Schließen"><svg><use href="#i-winclose"/></svg></button>
      </div>

      <div class="corner">
        <button aria-label="OK"><svg viewBox="0 0 24 20"><path d="M2 11l6 6L22 3" fill="none" stroke="#0c5f80" stroke-width="4"/><path d="M2 11l6 6L22 3" fill="none" stroke="#157f84" stroke-width="2"/></svg></button>
        <button class="second" aria-label="Abbrechen"><svg viewBox="0 0 24 20"><path d="M3 1l18 18M21 1 3 19" stroke="#2a3c80" stroke-width="3.500"/><path d="M3 1l18 18M21 1 3 19" stroke="#44408a" stroke-width="1.500"/></svg></button>
      </div>

      <nav class="taskpane">
        <button aria-label="Forum"><svg class="ic"><use href="#i-chat"/></svg></button>
        <button aria-label="Ressourcen"><svg class="ic"><use href="#i-home"/></svg></button>
        <button aria-label="Konstruktionsbibliothek"><svg class="ic"><use href="#i-library"/></svg></button>
        <button aria-label="Datei-Explorer"><svg class="ic"><use href="#i-folder"/></svg></button>
        <button aria-label="Ansichtspalette"><svg class="ic"><use href="#i-palette"/></svg></button>
        <button class="active" aria-label="Erscheinungsbilder"><svg class="ic"><use href="#i-ball"/></svg></button>
        <button aria-label="Benutzerdefinierte Eigenschaften"><svg class="ic"><use href="#i-custom"/></svg></button>
      </nav>
    </section>
    <div class="edge"></div>
  </main>
</div>
</body>
</html>
```
FILE: styles.css
```css
* { box-sizing: border-box; }
body {
  margin: 0;
  font: 11px/13px Roboto, "DejaVu Sans Condensed", sans-serif;
  color: #3c3c48;
  overflow: hidden;
}
button {
  margin: 0;
  padding: 0;
  border: 0;
  background: none;
  color: inherit;
  font: inherit;
}
h1, h2, h3 { margin: 0; font: inherit; }
svg { display: block; flex: none; overflow: hidden; }
.sprite { position: absolute; width: 0; height: 0; }
.ic { width: 16px; height: 16px; }
.ic.wide { width: 18px; }
.dd { width: 6px; height: 4px; color: #92929a; }
.on .dd { color: #22222c; }

.app { display: flex; flex-direction: column; height: 100vh; }

/* Title bar */
.titlebar {
  display: flex;
  height: 27px;
  background: linear-gradient(#eceefb, #d3d5e4 60%, #b9bbcc);
  border-bottom: 1px solid #4a4c58;
}
.brand {
  display: flex;
  flex: none;
  align-items: center;
  width: 129px;
  background: #fff;
  border-right: 9px solid #7c7fa8;
  color: #d0242c;
  gap: 4px;
}
.brand-mark { width: 20px; height: 20px; }
.brand-name { font: italic 14px/16px "Open Sans", sans-serif; }
.brand-name b { font-weight: 800; }
.menu {
  display: flex;
  flex: none;
  align-items: center;
  width: 533px;
  height: 27px;
  padding-left: 1px;
  background: linear-gradient(#dadcf2, #b4b6cc 60%, #c0c2d4);
  border-right: 2px solid #70728a;
  border-bottom: 1px solid #000;
  color: #23235f;
  white-space: nowrap;
}
.menu button { padding: 0 8px 0 7px; }
.menu .menu-pin { margin-left: auto; padding: 0 4px; }
.quick { display: flex; align-items: center; padding-left: 6px; }
.split { display: flex; align-items: center; width: 36px; gap: 7px; }
.single { width: 23px; }
.doc-title { flex: 1; align-self: center; padding-left: 271px; white-space: nowrap; }
.search {
  display: flex;
  align-items: center;
  gap: 4px;
  width: 62px;
  height: 23px;
  margin-top: 1px;
  padding-left: 5px;
  overflow: hidden;
  border: 1px solid #3c3e48;
  border-right: 0;
  border-radius: 4px 0 0 4px;
  background: linear-gradient(#dfe1ea, #fff);
}
.search input {
  flex: none;
  width: 80px;
  padding: 0;
  border: 0;
  background: none;
  color: #66666e;
  font: inherit;
}

/* Ribbon */
.ribbon {
  display: grid;
  grid-template-columns: 39px 66px 134px 57px 66px 58px 172px 97px 59px 58px 74px;
  height: 75px;
  background: linear-gradient(#fcfdff, #eff0f6 55%, #d0d2e0);
  border-bottom: 2px solid #5c5e6a;
  color: #76767c;
}
.sep { border-right: 1px solid #c2c4d0; }
.tool {
  display: flex;
  flex-direction: column;
  align-items: center;
  padding: 7px 0;
  white-space: nowrap;
}
.tool.low { padding-top: 14px; }
.tool.on { color: #23236c; }
.tool .dd { margin-top: auto; }
.entities {
  display: grid;
  grid-template-columns: 36px 36px 36px 16px;
  grid-template-rows: repeat(3, 23px);
  align-items: center;
  padding: 2px 0 0 5px;
}
.list {
  display: grid;
  grid-template-rows: repeat(3, 23px);
  padding: 3px 4px 0 1px;
}
.list button { display: flex; align-items: center; gap: 6px; }
.list .dd { margin-left: auto; }

/* Workspace */
.workspace { position: relative; display: flex; flex: 1; min-height: 0; }
.tabs {
  position: absolute;
  z-index: 2;
  left: 0;
  top: -2px;
  display: grid;
  grid-template-columns: 61px 54px 84px 56px 114px 74px 67px 122px 99px 75px;
  height: 20px;
  border-bottom: 1px solid #8a8c9c;
  font: 12px/14px "Liberation Sans", Arial, sans-serif;
  color: #55565f;
}
.tabs button {
  padding-bottom: 2px;
  border: 1px solid #4f515e;
  border-left: 0;
  background: #b5b7c9;
}
.tabs .first { padding-right: 6px; }
.tabs .active {
  height: 21px;
  border-top-color: #e8eaf2;
  background: #f2f3f8;
  color: #222;
  font-weight: bold;
}

.panel {
  position: relative;
  flex: none;
  width: 184px;
  padding-top: 22px;
  background: #dfe1ea;
  border-right: 3px solid #61636f;
}
.panel::before {
  content: "";
  display: block;
  height: 1px;
  background: #8d90ac;
}
.panel-tabs {
  display: grid;
  grid-template-columns: 22px 28px 27px 28px 28px;
  height: 27px;
  padding-top: 4px;
  background: #cdd0e4;
  border-bottom: 1px solid #8d90ac;
}
.panel-tabs button {
  display: grid;
  place-items: center;
  border: 1px solid #8689a0;
  border-bottom: 0;
  border-radius: 3px 3px 0 0;
  background: linear-gradient(#c9cbda, #b2b4c6);
}
.panel-tabs button:first-child { place-items: center start; border-left: 0; }
.panel-tabs .active { background: #f0f1f6; }
.panel-title {
  display: flex;
  align-items: center;
  height: 22px;
  margin: 2px 1px 0 0;
  padding-right: 7px;
  border: 1px solid #33344a;
  border-left: 0;
  background: linear-gradient(#8a8ba4, #77789a 50%, #a4a5ba);
  color: #fff;
  font: bold 13px/18px "DejaVu Sans Condensed", sans-serif;
}
.panel-title button { margin-left: auto; }
.confirm {
  position: relative;
  display: flex;
  align-items: center;
  gap: 9px;
  height: 35px;
  padding-bottom: 7px;
  background: #e8e9f1;
}
.tooltip {
  position: absolute;
  z-index: 3;
  left: -1px;
  top: 29px;
  padding: 2px 6px;
  border: 1px solid #767680;
  border-radius: 3px;
  background: linear-gradient(#fff, #e6e7f0);
  box-shadow: 2px 2px 2px rgba(0, 0, 0, .45);
  color: #55555c;
  font-size: 12px;
  line-height: 15px;
}
.group { margin-right: 2px; border: 1px solid #8d90ac; border-left: 0; background: #e7e8f1; }
.group-head {
  display: flex;
  align-items: center;
  justify-content: space-between;
  height: 19px;
  padding: 0 5px 0 11px;
  border-bottom: 1px solid #a9abbc;
  background: linear-gradient(#d9dbe4, #bdc0cf);
  font-weight: bold;
}
.chev { width: 10px; height: 10px; }
.group-body {
  display: grid;
  grid-template-columns: 30px 136px;
  padding: 3px 0 7px 3px;
}
.origin { width: 18px; height: 18px; margin: 2px 0 0 5px; }
.group-body label { grid-column: 2; padding: 8px 0 3px; }
.field {
  display: block;
  height: 33px;
  padding: 3px;
  border: 1px solid #82859c;
  background: #fff;
  color: #3c3c48;
  font: inherit;
  resize: none;
}
.field.short { height: 23px; margin-bottom: 2px; padding: 0 3px 2px; }
.field.current { border: 2px solid #6ab0dc; background: #cde3f8; }
.flip {
  --flip-a: #2456b8;
  --flip-b: #15151c;
  display: grid;
  place-items: center;
  width: 24px;
  height: 24px;
  border: 1px solid #8a8c98;
  border-radius: 4px;
  background: linear-gradient(#fff, #dfe1ea);
}
.flip.off { --flip-a: #a6a8b2; --flip-b: #8e909a; border-color: transparent; background: none; }
.splitter {
  position: absolute;
  z-index: 2;
  right: -11px;
  top: 436px;
  width: 11px;
  height: 28px;
  border: 1px solid #61636f;
  border-left: 0;
  border-radius: 0 4px 4px 0;
  background: #e6e8f2;
}
.splitter svg { width: 10px; height: 28px; }

/* Graphics area */
.viewport {
  position: relative;
  flex: 1;
  min-width: 0;
  overflow: hidden;
  background:
    linear-gradient(90deg, rgba(0, 0, 0, 0), rgba(0, 0, 0, .09) 540px, rgba(0, 0, 0, .18) 1000px),
    linear-gradient(176deg, #ebebeb 0, #e7e7e7 250px, #dedede 350px, #c7cad2 480px, #c8cad1 520px, #d2d2d2 580px, #dedede 670px, #e8e8e8 780px);
}
.edge { width: 4px; background: #c4c6d6; border-left: 2px solid #5e6484; }
.scene { width: 100%; height: 100%; }
.scene text { font: 11px "DejaVu Sans Condensed", sans-serif; }
.axis-x { fill: #e02020; }
.axis-y { fill: #1f8a24; }
.axis-z { fill: #1818c0; }
.tree {
  position: absolute;
  left: 1px;
  top: 23px;
  display: flex;
  align-items: center;
  color: #000;
}
.tree i { width: 6px; height: 1px; background: #777; }
.tree span { padding: 1px 0 0 5px; font: 11px/16px "DejaVu Sans Condensed", sans-serif; }
.expand {
  width: 9px;
  height: 9px;
  border: 1px solid #555;
  background: #fff;
  font: 9px/7px "DejaVu Sans", sans-serif;
}
.view-tools { position: absolute; left: 571px; top: 26px; display: flex; }
.view-tools button { display: flex; align-items: center; width: 23px; gap: 4px; }
.view-tools .more { width: 33px; }
.view-tools .dd { color: #1d3d74; }
.win-tools { position: absolute; right: 12px; top: 8px; display: flex; gap: 10px; }
.win-tools svg { width: 12px; height: 12px; }
.win-tools .w14 { width: 14px; }
.corner { position: absolute; right: 43px; top: 54px; display: grid; grid-template-columns: 24px 24px; gap: 10px 8px; }
.corner svg { width: 24px; height: 20px; }
.corner .second { grid-area: 2 / 2; }
.taskpane { position: absolute; right: -1px; top: 59px; display: grid; grid-auto-rows: 24px; }
.taskpane button {
  display: grid;
  place-items: center;
  width: 24px;
  border: 1px solid #7c7e92;
  border-radius: 3px 0 0 3px;
  background: linear-gradient(#cfd1de, #b3b5c6);
}
.taskpane .active { background: #f4f5fa; }
```
